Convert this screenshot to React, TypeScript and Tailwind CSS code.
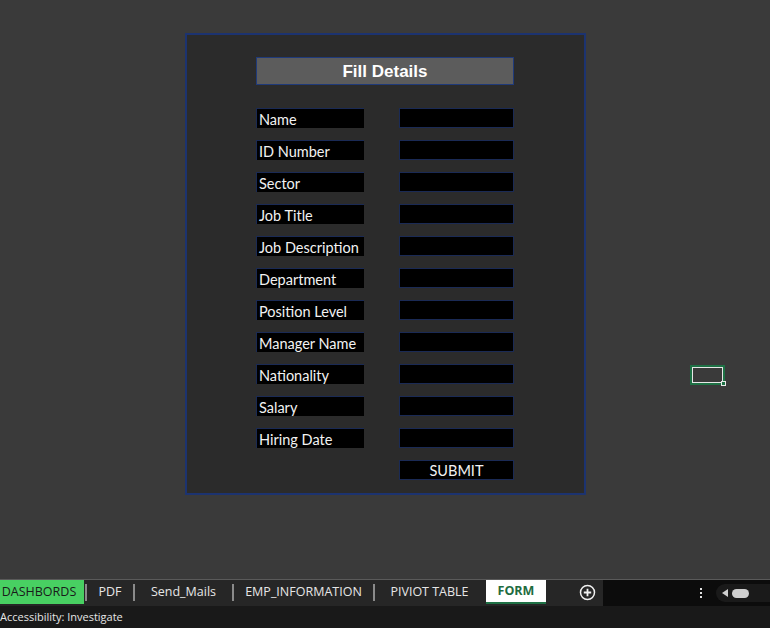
import React from "react";

const fields = [
  "Name",
  "ID Number",
  "Sector",
  "Job Title",
  "Job Description",
  "Department",
  "Position Level",
  "Manager Name",
  "Nationality",
  "Salary",
  "Hiring Date",
];

const tabs = ["PDF", "Send_Mails", "EMP_INFORMATION", "PIVIOT TABLE"];

const App: React.FC = () => {
  return (
    <div className="w-[770px] h-[628px] flex flex-col bg-[#3a3a3a] overflow-hidden font-['Open_Sans',sans-serif]">
      {/* Sheet area */}
      <div className="relative h-[579px] pt-[33px] pl-[185px]">
        <div className="w-[401px] h-[462px] border-2 border-[#1c3370] bg-[#2b2b2b] pl-[69px] pt-[22px]">
          <div className="w-[258px] h-[28px] bg-[#5c5c5c] border border-[#1f3a7a] flex items-center justify-center pt-[1px] text-white font-bold text-[17px] font-['Liberation_Sans',sans-serif]">
            Fill Details
          </div>

          <div className="mt-[23px] flex flex-col gap-[12px]">
            {fields.map((f) => (
              <div key={f} className="flex gap-[35px] h-[20px]">
                <div className="w-[108px] h-[20px] bg-black border-t border-l border-[#1a2a55] pl-[2px] text-[14.5px] leading-[21px] text-[#f2f2f2] font-['Lato',sans-serif] whitespace-nowrap">
                  {f}
                </div>
                <div className="w-[115px] h-[20px] bg-black border border-[#1a2a55]" />
              </div>
            ))}
            <div className="flex gap-[35px] h-[20px]">
              <div className="w-[108px]" />
              <div className="w-[115px] h-[20px] bg-black border border-[#1a2a55] flex items-center justify-center pt-[2px] text-[14.5px] text-[#f2f2f2] font-['Lato',sans-serif]">
                SUBMIT
              </div>
            </div>
          </div>
        </div>

        {/* selected cell */}
        <div className="absolute left-[690px] top-[365px] w-[35px] h-[20px] border-2 border-[#1e7145]">
          <div className="w-full h-full border border-[#e8e8e8]" />
          <div className="absolute -right-[3px] -bottom-[3px] w-[5px] h-[5px] bg-[#1e7145] border border-[#e8e8e8]" />
        </div>
      </div>

      {/* Tab bar */}
      <div className="h-[27px] flex border-t border-[#5a5a5a] bg-[#262626] text-[12.5px] text-[#e6e6e6]">
        <div className="w-[90px] shrink-0 h-[24px] bg-[#48d062] text-[#1a1a1a] flex items-center justify-center -ml-[6px] pt-[1px]">
          DASHBORDS
        </div>
        {tabs.map((t) => (
          <div key={t} className="flex items-center h-[24px] pt-[1px]">
            <div className="w-[2px] h-[17px] bg-[#8a8a8a] mx-[1px]" />
            <div
              className={
                t === "PDF"
                  ? "w-[44px] text-center"
                  : t === "Send_Mails"
                  ? "w-[95px] text-center"
                  : t === "EMP_INFORMATION"
                  ? "w-[137px] text-center"
                  : "w-[107px] text-center"
              }
            >
              {t}
            </div>
          </div>
        ))}
        <div className="w-[60px] h-[24px] bg-white border-b-2 border-[#1e7145] text-[#1e6b3f] font-bold flex items-center justify-center ml-[3px]">
          FORM
        </div>
        <div className="w-[57px] h-[24px] flex items-center pl-[33px]">
          <svg width="17" height="17" viewBox="0 0 17 17">
            <circle cx="8.5" cy="8.5" r="7" fill="none" stroke="#f0f0f0" strokeWidth="1.5" />
            <path d="M8.5 4.8v7.4M4.8 8.5h7.4" stroke="#f0f0f0" strokeWidth="1.8" />
          </svg>
        </div>
        <div className="flex-1 h-[26px] bg-[#0c0c0c] flex items-center justify-end">
          <div className="flex flex-col gap-[2px] mr-[14px]">
            <div className="w-[2px] h-[2px] bg-[#e0e0e0]" />
            <div className="w-[2px] h-[2px] bg-[#e0e0e0]" />
            <div className="w-[2px] h-[2px] bg-[#e0e0e0]" />
          </div>
          <div className="h-[18px] w-[54px] bg-[#1a1a1a] rounded-l-full flex items-center pl-[6px] gap-[4px]">
            <svg width="6" height="8" viewBox="0 0 6 8">
              <path d="M6 0 L0 4 L6 8 Z" fill="#d0d0d0" />
            </svg>
            <div className="w-[17px] h-[9px] rounded-full bg-[#cfcfcf]" />
          </div>
        </div>
      </div>

      {/* Status bar */}
      <div className="flex-1 bg-[#191919] text-[11px] text-[#e6e6e6] flex items-center">
        Accessibility: Investigate
      </div>
    </div>
  );
};

export default App;
